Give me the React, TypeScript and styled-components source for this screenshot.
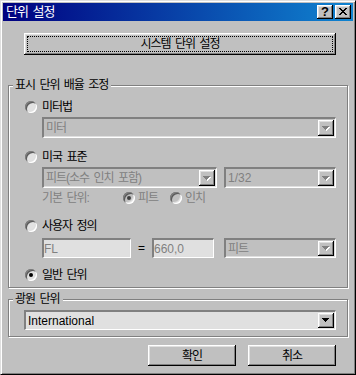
import React from 'react';
import styled, { createGlobalStyle } from 'styled-components';

const FONT = `"Liberation Sans", "Noto Sans CJK KR", sans-serif`;

const GlobalStyle = createGlobalStyle`
  html, body { margin: 0; padding: 0; background: #c0c0c0; }
  * { box-sizing: border-box; }
`;

const Window = styled.div`
  width: 356px;
  height: 375px;
  background: #c0c0c0;
  border: 1px solid;
  border-color: #dfdfdf #000 #000 #dfdfdf;
  box-shadow: inset 1px 1px #fff, inset -1px -1px #808080;
  padding: 2px;
  display: flex;
  flex-direction: column;
  font-family: ${FONT};
  font-size: 12px;
  letter-spacing: -1px;
  word-spacing: 2px;
  color: #000;
`;

const TitleBar = styled.div`
  flex: none;
  height: 18px;
  display: flex;
  align-items: center;
  gap: 2px;
  padding: 0 2px 0 3px;
  background: linear-gradient(to right, #000080, #1084d0);
`;

const Title = styled.span`
  flex: 1;
  color: #fff;
  font-size: 13px;
  line-height: 18px;
`;

const raised = `
  background: #c0c0c0;
  box-shadow: inset -1px -1px #000, inset 1px 1px #fff, inset -2px -2px #808080, inset 2px 2px #dfdfdf;
`;

const CaptionButton = styled.span`
  width: 16px;
  height: 14px;
  flex: none;
  display: flex;
  align-items: center;
  justify-content: center;
  ${raised}
  font-family: "Liberation Sans", sans-serif;
  font-weight: bold;
  font-size: 13px;
  letter-spacing: 0;
  line-height: 14px;
  padding-bottom: 1px;
`;

const Body = styled.div`
  display: flex;
  flex-direction: column;
  padding: 0 5px;
`;

const PushButton = styled.div<{ $focus?: boolean; $w?: number; $h: number }>`
  position: relative;
  height: ${(p) => p.$h}px;
  width: ${(p) => (p.$w ? `${p.$w}px` : 'auto')};
  display: flex;
  align-items: center;
  justify-content: center;
  ${raised}
  line-height: 14px;
  &::after {
    content: '';
    display: ${(p) => (p.$focus ? 'block' : 'none')};
    position: absolute;
    inset: 3px 3px 3px 3px;
    border: 1px dotted #000;
  }
`;

const SystemButton = styled(PushButton)`
  margin: 12px 12px 0 16px;
`;

const Group = styled.div<{ $mt: number; $pt: number; $pb: number; $pl: number }>`
  position: relative;
  margin-top: ${(p) => p.$mt}px;
  border: 1px solid #808080;
  box-shadow: inset 1px 1px #fff, 1px 1px #fff;
  padding: ${(p) => p.$pt}px 11px ${(p) => p.$pb}px ${(p) => p.$pl}px;
  display: flex;
  flex-direction: column;
`;

const GroupLabel = styled.span`
  position: absolute;
  top: -8px;
  left: 4px;
  padding: 0 3px 0 2px;
  background: #c0c0c0;
  line-height: 14px;
`;

const RadioRow = styled.div<{ $mt: number }>`
  display: flex;
  align-items: center;
  gap: 5px;
  height: 16px;
  margin-top: ${(p) => p.$mt}px;
  line-height: 14px;
`;

const Radio = styled.span<{ $checked?: boolean; $disabled?: boolean }>`
  width: 12px;
  height: 12px;
  flex: none;
  border-radius: 50%;
  background: ${(p) => (p.$disabled ? '#c0c0c0' : '#e2e2e2')};
  box-shadow: inset 1px 1px #808080, inset -1px -1px #fff, inset 2px 2px #5a5a5a, inset -2px -2px #dfdfdf;
  display: flex;
  align-items: center;
  justify-content: center;
  &::after {
    content: '';
    display: ${(p) => (p.$checked ? 'block' : 'none')};
    width: 4px;
    height: 4px;
    border-radius: 50%;
    background: ${(p) => (p.$disabled ? '#404040' : '#000')};
  }
`;

const Indented = styled.div<{ $mt: number; $h: number; $ml?: number }>`
  display: flex;
  align-items: center;
  margin-left: ${(p) => (p.$ml === undefined ? 17 : p.$ml)}px;
  margin-top: ${(p) => p.$mt}px;
  height: ${(p) => p.$h}px;
  line-height: 14px;
`;

const sunken = `
  border-style: solid;
  border-width: 2px 1px 1px 2px;
  border-color: #808080 #fff #fff #808080;
  box-shadow: inset -1px -1px #dfdfdf;
`;

const Combo = styled.div<{ $w?: number; $light?: boolean }>`
  display: flex;
  align-items: center;
  align-self: stretch;
  flex: ${(p) => (p.$w ? 'none' : '1')};
  width: ${(p) => (p.$w ? `${p.$w}px` : 'auto')};
  background: ${(p) => (p.$light ? '#e0e0e0' : '#c0c0c0')};
  ${sunken}
  padding: 1px;
`;

const FieldText = styled.span<{ $disabled?: boolean; $latin?: boolean; $pl: number }>`
  flex: 1;
  padding-left: ${(p) => p.$pl}px;
  color: ${(p) => (p.$disabled ? '#808080' : '#000')};
  white-space: nowrap;
  overflow: hidden;
  line-height: 14px;
  letter-spacing: ${(p) => (p.$latin ? '0' : '-1px')};
`;

const ComboButton = styled.span`
  width: 16px;
  flex: none;
  align-self: stretch;
  display: flex;
  align-items: center;
  justify-content: center;
  ${raised}
`;

const TextBox = styled.div<{ $w: number }>`
  width: ${(p) => p.$w}px;
  flex: none;
  align-self: stretch;
  display: flex;
  align-items: center;
  background: #e0e0e0;
  ${sunken}
`;

const Equals = styled.span`
  width: 21px;
  flex: none;
  text-align: center;
  letter-spacing: 0;
`;

const Spacer = styled.span<{ $w: number }>`
  width: ${(p) => p.$w}px;
  flex: none;
`;

const DimText = styled.span`
  color: #808080;
`;

const DimLabel = styled(DimText)`
  width: 81px;
  flex: none;
`;

const Option = styled.span<{ $w?: number }>`
  display: flex;
  align-items: center;
  gap: 3px;
  width: ${(p) => (p.$w ? `${p.$w}px` : 'auto')};
  flex: none;
`;

const ButtonRow = styled.div`
  display: flex;
  justify-content: flex-end;
  gap: 12px;
  margin-top: 8px;
  padding-right: 12px;
`;

const Arrow = ({ disabled }: { disabled?: boolean }) => (
  <svg width="8" height="5" viewBox="0 0 8 5" shapeRendering="crispEdges">
    {disabled && (
      <g fill="#fff">
        <rect x="1" y="1" width="7" height="1" />
        <rect x="2" y="2" width="5" height="1" />
        <rect x="3" y="3" width="3" height="1" />
        <rect x="4" y="4" width="1" height="1" />
      </g>
    )}
    <g fill={disabled ? '#808080' : '#000'}>
      <rect x="0" y="0" width="7" height="1" />
      <rect x="1" y="1" width="5" height="1" />
      <rect x="2" y="2" width="3" height="1" />
      <rect x="3" y="3" width="1" height="1" />
    </g>
  </svg>
);

const CloseGlyph = () => (
  <svg width="8" height="7" viewBox="0 0 8 7" shapeRendering="crispEdges" fill="#000">
    <rect x="0" y="0" width="2" height="1" />
    <rect x="6" y="0" width="2" height="1" />
    <rect x="1" y="1" width="2" height="1" />
    <rect x="5" y="1" width="2" height="1" />
    <rect x="2" y="2" width="4" height="1" />
    <rect x="3" y="3" width="2" height="1" />
    <rect x="2" y="4" width="4" height="1" />
    <rect x="1" y="5" width="2" height="1" />
    <rect x="5" y="5" width="2" height="1" />
    <rect x="0" y="6" width="2" height="1" />
    <rect x="6" y="6" width="2" height="1" />
  </svg>
);

type ComboProps = { text: string; w?: number; disabled?: boolean; latin?: boolean; light?: boolean };

const ComboBox = ({ text, w, disabled, latin, light }: ComboProps) => (
  <Combo $w={w} $light={light}>
    <FieldText $disabled={disabled} $latin={latin} $pl={1}>
      {text}
    </FieldText>
    <ComboButton>
      <Arrow disabled={disabled} />
    </ComboButton>
  </Combo>
);

export default function App() {
  return (
    <>
      <GlobalStyle />
      <Window>
        <TitleBar>
          <Title>단위 설정</Title>
          <CaptionButton>?</CaptionButton>
          <CaptionButton>
            <CloseGlyph />
          </CaptionButton>
        </TitleBar>
        <Body>
          <SystemButton $focus $h={22}>
            시스템 단위 설정
          </SystemButton>

          <Group $mt={30} $pt={13} $pb={4} $pl={16}>
            <GroupLabel>표시 단위 배율 조정</GroupLabel>
            <RadioRow $mt={0}>
              <Radio />
              <span>미터법</span>
            </RadioRow>
            <Indented $mt={2} $h={21}>
              <ComboBox text="미터" disabled />
            </Indented>

            <RadioRow $mt={11}>
              <Radio />
              <span>미국 표준</span>
            </RadioRow>
            <Indented $mt={2} $h={21}>
              <ComboBox text="피트(소수 인치 포함)" disabled />
              <Spacer $w={7} />
              <ComboBox text="1/32" w={112} disabled latin />
            </Indented>
            <Indented $mt={2} $h={16}>
              <DimLabel>기본 단위:</DimLabel>
              <Option $w={47}>
                <Radio $disabled $checked />
                <DimText>피트</DimText>
              </Option>
              <Option>
                <Radio $disabled />
                <DimText>인치</DimText>
              </Option>
            </Indented>

            <RadioRow $mt={12}>
              <Radio />
              <span>사용자 정의</span>
            </RadioRow>
            <Indented $mt={4} $h={20}>
              <TextBox $w={89}>
                <FieldText $disabled $latin $pl={0}>
                  FL
                </FieldText>
              </TextBox>
              <Equals>=</Equals>
              <TextBox $w={62}>
                <FieldText $disabled $latin $pl={0}>
                  660,0
                </FieldText>
              </TextBox>
              <Spacer $w={10} />
              <ComboBox text="피트" w={112} disabled />
            </Indented>

            <RadioRow $mt={9}>
              <Radio $checked />
              <span>일반 단위</span>
            </RadioRow>
          </Group>

          <Group $mt={11} $pt={10} $pb={6} $pl={15}>
            <GroupLabel>광원 단위</GroupLabel>
            <Indented $mt={0} $h={20} $ml={0}>
              <ComboBox text="International" latin light />
            </Indented>
          </Group>

          <ButtonRow>
            <PushButton $w={88} $h={21}>
              확인
            </PushButton>
            <PushButton $w={88} $h={21}>
              취소
            </PushButton>
          </ButtonRow>
        </Body>
      </Window>
    </>
  );
}
